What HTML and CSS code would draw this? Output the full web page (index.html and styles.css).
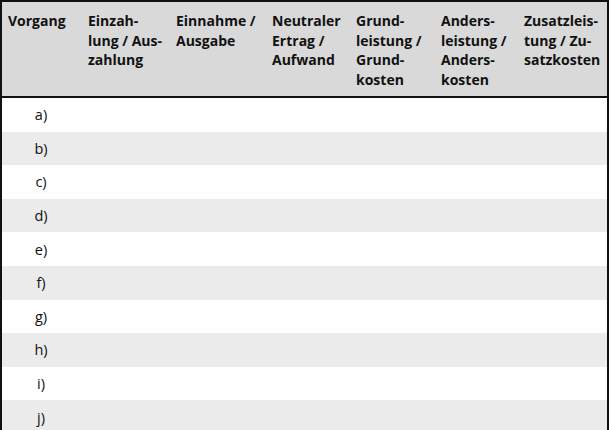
FILE: index.html
```html
<!DOCTYPE html>
<html lang="de">
<head>
<meta charset="utf-8">
<link rel="stylesheet" href="styles.css">
</head>
<body>
<table class="grid">
  <colgroup>
    <col class="c1"><col class="c2"><col class="c3"><col class="c4"><col class="c5"><col class="c6"><col class="c7">
  </colgroup>
  <thead>
    <tr>
      <th>Vorgang</th>
      <th>Einzah-<br>lung / Aus-<br>zahlung</th>
      <th>Einnahme /<br>Ausgabe</th>
      <th>Neutraler<br>Ertrag /<br>Aufwand</th>
      <th>Grund-<br>leistung /<br>Grund-<br>kosten</th>
      <th>Anders-<br>leistung /<br>Anders-<br>kosten</th>
      <th>Zusatzleis-<br>tung / Zu-<br>satzkosten</th>
    </tr>
  </thead>
  <tbody>
    <tr><td class="lbl">a)</td><td></td><td></td><td></td><td></td><td></td><td></td></tr>
    <tr><td class="lbl">b)</td><td></td><td></td><td></td><td></td><td></td><td></td></tr>
    <tr><td class="lbl">c)</td><td></td><td></td><td></td><td></td><td></td><td></td></tr>
    <tr><td class="lbl">d)</td><td></td><td></td><td></td><td></td><td></td><td></td></tr>
    <tr><td class="lbl">e)</td><td></td><td></td><td></td><td></td><td></td><td></td></tr>
    <tr><td class="lbl">f)</td><td></td><td></td><td></td><td></td><td></td><td></td></tr>
    <tr><td class="lbl">g)</td><td></td><td></td><td></td><td></td><td></td><td></td></tr>
    <tr><td class="lbl">h)</td><td></td><td></td><td></td><td></td><td></td><td></td></tr>
    <tr><td class="lbl">i)</td><td></td><td></td><td></td><td></td><td></td><td></td></tr>
    <tr><td class="lbl">j)</td><td></td><td></td><td></td><td></td><td></td><td></td></tr>
  </tbody>
</table>
</body>
</html>
```
FILE: styles.css
```css
html, body {
  margin: 0;
  padding: 0;
  background: #ffffff;
}
body {
  font-family: "Open Sans", "Noto Sans", sans-serif;
  color: #111111;
  overflow: hidden;
}
.grid {
  border-collapse: collapse;
  table-layout: fixed;
  width: 609px;
  border-left: 2px solid #111;
  border-right: 2px solid #111;
  border-top: 2px solid #111;
}
.c1 { width: 79px; }
.c2 { width: 88px; }
.c3 { width: 96px; }
.c4 { width: 84px; }
.c5 { width: 85px; }
.c6 { width: 83px; }
.c7 { width: 92px; }
thead th {
  background: #d9d9d9;
  font-weight: 700;
  font-size: 14px;
  line-height: 19.5px;
  text-align: left;
  vertical-align: top;
  padding: 9px 2px 0 8px;
  height: 85px;
  border-bottom: 2px solid #111;
  white-space: nowrap;
}
thead th:first-child {
  padding-left: 6px;
}
tbody td {
  height: 33.6px;
  padding: 0;
  font-size: 14.5px;
  vertical-align: middle;
}
tbody tr:nth-child(even) td {
  background: #ebebeb;
}
tbody td.lbl {
  text-align: center;
}
```
